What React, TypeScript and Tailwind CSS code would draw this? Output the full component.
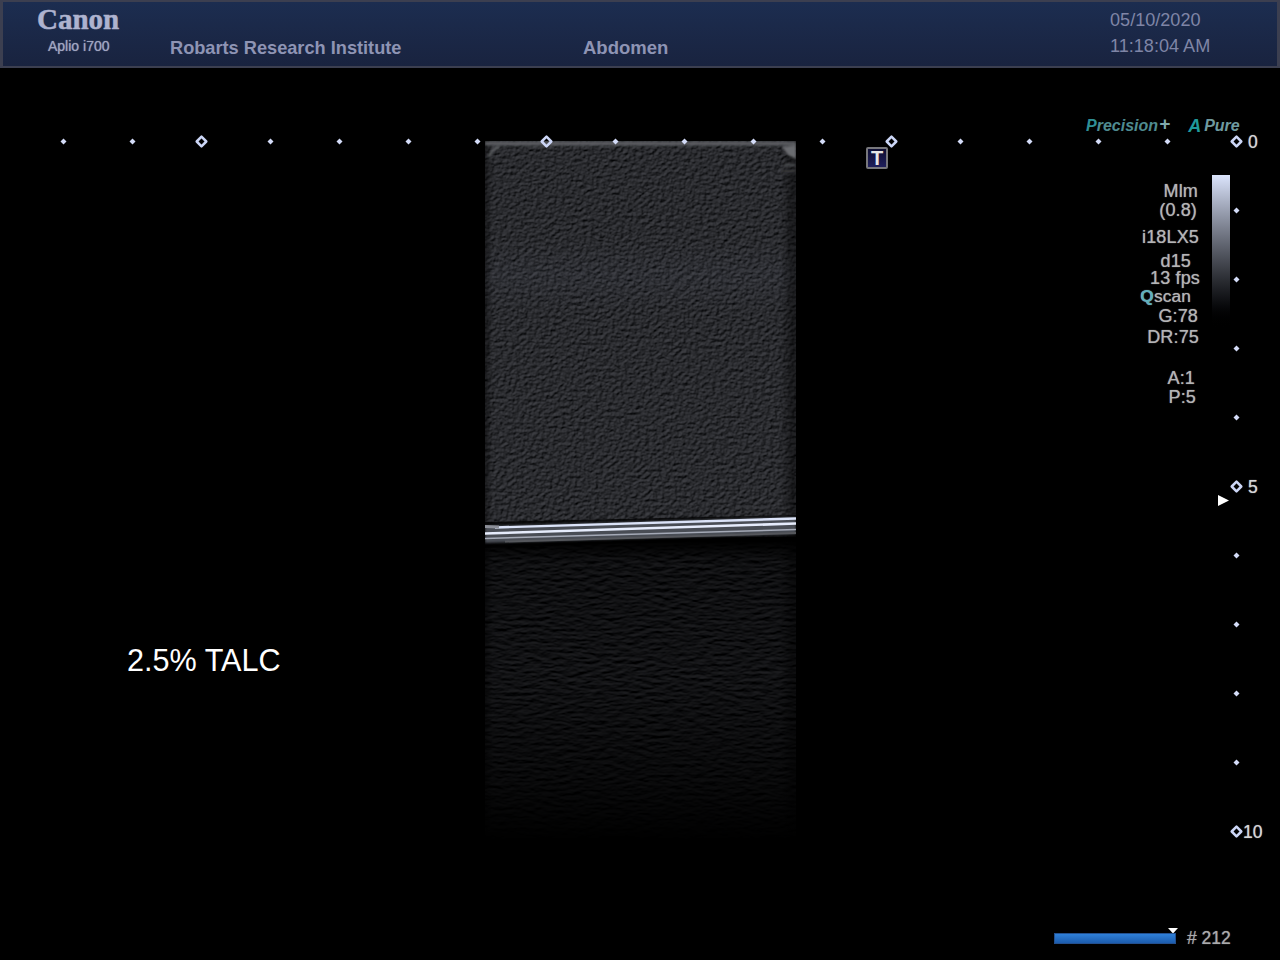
const ticksX = [63, 132, 201, 270, 339, 408, 477, 546, 615, 684, 753, 822, 891, 960, 1029, 1098, 1167, 1236];
const ticksY = [141, 210, 279, 348, 417, 486, 555, 624, 693, 762, 831];
const majorX = new Set([201, 546, 891, 1236]);
const majorY = new Set([141, 486, 831]);

function Tick({ x, y, major }: { x: number; y: number; major: boolean }) {
  if (major) {
    return <path d={`M${x} ${y - 4.8}L${x + 4.8} ${y}L${x} ${y + 4.8}L${x - 4.8} ${y}Z`} fill="none" stroke="#ccd6f6" strokeWidth="2.5" strokeLinejoin="round" />;
  }
  return <path d={`M${x} ${y - 3}L${x + 3} ${y}L${x} ${y + 3}L${x - 3} ${y}Z`} fill="#d4dcf8" />;
}

function Scale() {
  return (
    <svg className="absolute left-0 top-0" width="1280" height="960">
      {ticksX.map((x) => <Tick key={`x${x}`} x={x + 0.5} y={141.5} major={majorX.has(x)} />)}
      {ticksY.slice(1).map((y) => <Tick key={`y${y}`} x={1236.5} y={y + 0.5} major={majorY.has(y)} />)}
      <path d="M1218 495L1229 500.5L1218 506Z" fill="#ffffff" />
      <path d="M1168 928H1178L1173 933.5Z" fill="#ffffff" />
    </svg>
  );
}

function Sonogram() {
  return (
    <svg className="absolute left-[485px] top-[141px]" width="311" height="700" viewBox="0 0 311 700">
      <defs>
        <filter id="speckle" x="0" y="0" width="100%" height="100%" colorInterpolationFilters="sRGB">
          <feTurbulence type="fractalNoise" baseFrequency="0.24 0.3" numOctaves="3" seed="7" />
          <feGaussianBlur stdDeviation="0.55" />
          <feDiffuseLighting surfaceScale="0.95" diffuseConstant="1" lightingColor="#ffffff">
            <feDistantLight azimuth="235" elevation="55" />
          </feDiffuseLighting>
          <feColorMatrix type="matrix" values="0.5 0 0 0 -0.245  0 0.5 0 0 -0.24  0 0 0.53 0 -0.25  0 0 0 0 1" />
        </filter>
        <filter id="speckleLow" x="0" y="0" width="100%" height="100%" colorInterpolationFilters="sRGB">
          <feTurbulence type="fractalNoise" baseFrequency="0.09 0.28" numOctaves="3" seed="12" />
          <feGaussianBlur stdDeviation="0.7" />
          <feDiffuseLighting surfaceScale="0.85" diffuseConstant="1" lightingColor="#ffffff">
            <feDistantLight azimuth="260" elevation="55" />
          </feDiffuseLighting>
          <feColorMatrix type="matrix" values="0.4 0 0 0 -0.25  0 0.4 0 0 -0.248  0 0 0.42 0 -0.255  0 0 0 0 1" />
        </filter>
        <filter id="soft" x="-5%" y="-50%" width="110%" height="200%"><feGaussianBlur stdDeviation="0.8" /></filter>
        <linearGradient id="lowerFade" x1="0" y1="0" x2="0" y2="1">
          <stop offset="0" stopColor="#fff" stopOpacity="0" />
          <stop offset="0.07" stopColor="#fff" stopOpacity="0.75" />
          <stop offset="0.45" stopColor="#fff" stopOpacity="0.85" />
          <stop offset="0.8" stopColor="#fff" stopOpacity="0.4" />
          <stop offset="1" stopColor="#fff" stopOpacity="0" />
        </linearGradient>
        <linearGradient id="sideFade" x1="0" y1="0" x2="1" y2="0">
          <stop offset="0" stopColor="#000" stopOpacity="0.45" />
          <stop offset="0.025" stopColor="#000" stopOpacity="0" />
          <stop offset="0.95" stopColor="#000" stopOpacity="0" />
          <stop offset="0.985" stopColor="#000" stopOpacity="0.4" />
        </linearGradient>
        <linearGradient id="midGlow" x1="0" y1="0" x2="0" y2="1">
          <stop offset="0" stopColor="#8a94b4" stopOpacity="0" />
          <stop offset="0.5" stopColor="#8a94b4" stopOpacity="0.05" />
          <stop offset="1" stopColor="#8a94b4" stopOpacity="0" />
        </linearGradient>
        <mask id="lowerMask"><rect y="400" width="311" height="300" fill="url(#lowerFade)" /></mask>
      </defs>

      <rect width="311" height="396" filter="url(#speckle)" />
      <rect y="100" width="311" height="70" fill="url(#midGlow)" />
      <g mask="url(#lowerMask)">
        <rect y="400" width="311" height="300" filter="url(#speckleLow)" />
      </g>
      <rect width="311" height="700" fill="url(#sideFade)" />

      <g filter="url(#soft)">
        <path d="M0 2.5H311" stroke="#5a5c60" strokeWidth="4" />
        <path d="M3 16L8 9L14 6" stroke="#65676b" strokeWidth="2" fill="none" />
        <path d="M297 6L311 4V18L303 14Z" fill="#6a6c70" />
        <path d="M299 24H311" stroke="#55575a" strokeWidth="2" />
        <path d="M296 30H311" stroke="#3f4043" strokeWidth="2" />
      </g>

      <path d="M0 381L311 374V396L0 407Z" fill="#000000" opacity="0.75" />
      <g filter="url(#soft)">
        <path d="M0 385L311 376V393L0 402Z" fill="#4a4d55" />
      </g>
      <path d="M10 386.5L311 377.5" stroke="#dbe3f8" strokeWidth="2.4" />
      <path d="M0 385.5L14 386" stroke="#8c8f98" strokeWidth="3" />
      <path d="M0 392.5L311 382.5" stroke="#e6ecfc" strokeWidth="2.6" />
      <path d="M0 397.5L311 388.5" stroke="#a4a9b6" strokeWidth="1.5" />
      <path d="M20 400.5L311 392" stroke="#55575c" strokeWidth="2" />
    </svg>
  );
}

const labels = [
  { t: "Mlm", h: "h-[19px]", pr: "pr-[2px]" },
  { t: "(0.8)", h: "h-[27px]", pr: "pr-[3px]" },
  { t: "i18LX5", h: "h-[24px]", pr: "pr-[1px]" },
  { t: "d15", h: "h-[17px]", pr: "pr-[9px]" },
  { t: "13 fps", h: "h-[19px]", pr: "pr-0" },
];
const labels2 = [
  { t: "G:78", h: "h-[21px]", pr: "pr-[2px]" },
  { t: "DR:75", h: "h-[41px]", pr: "pr-[1px]" },
  { t: "A:1", h: "h-[19px]", pr: "pr-[5px]" },
  { t: "P:5", h: "h-[19px]", pr: "pr-[4px]" },
];

export default function App() {
  return (
    <div className="relative w-[1280px] h-[960px] overflow-hidden bg-black font-['Liberation_Sans',Arial,sans-serif]">
      <header className="flex h-[68px] border-x-[3px] border-y-2 border-[#3c3f50] bg-gradient-to-b from-[#1c2d50] to-[#19233f] text-[#8e94b4]">
        <div className="flex w-[167px] flex-col items-start">
          <span className="ml-[34px] mt-[3px] h-[27px] text-[29px] font-bold leading-[28px] text-[#aeb3cf] [-webkit-text-stroke:0.5px_#aeb3cf] font-['Liberation_Serif',serif]">Canon</span>
          <span className="ml-[45px] mt-[6px] text-[14px] leading-[16px] text-[#a0a6c2] [text-shadow:0_0_1px_#8c92ae]">Aplio i700</span>
        </div>
        <span className="mt-[36px] w-[413px] text-[18.2px] font-bold leading-5">Robarts Research Institute</span>
        <span className="mt-[36px] w-[527px] text-[18.5px] font-bold leading-5">Abdomen</span>
        <div className="mt-[9px] flex flex-col gap-[8px] text-[18.1px] leading-[18px] text-[#7f85a6]">
          <span>05/10/2020</span>
          <span>11:18:04 AM</span>
        </div>
      </header>

      <Sonogram />
      <Scale />

      <div className="absolute left-[1086px] top-[117px] flex w-[156px] items-start text-[16px] font-bold italic leading-[18px]">
        <span className="text-[#2f8f96]">P<span className="text-[#4f8b90]">recision</span></span>
        <span className="-mt-[2px] ml-[1px] text-[19px] text-[#7fa9ac]">+</span>
        <span className="ml-[18px] text-[18px] text-[#1f9a9a]">A</span>
        <span className="ml-[3px] text-[#6f9a9f]">Pure</span>
      </div>

      <div className="absolute left-[866px] top-[147px] flex h-[22px] w-[22px] items-center justify-center rounded-[2px] border-2 border-[#77777c] bg-gradient-to-b from-[#0e0e33] to-[#20205c] text-[20px] font-bold leading-none text-[#e6e6e6]">T</div>

      <div className="absolute left-[1212px] top-[175px] h-[155px] w-[18px] bg-gradient-to-b from-[#dbe4fc] to-black" />

      <div className="absolute left-[1100px] top-[182px] flex w-[100px] flex-col items-end text-[18px] leading-[18px] tracking-[0.15px] text-[#b4b4b6] [text-shadow:0_0_1px_#98989a]">
        {labels.map((l) => <div key={l.t} className={`${l.h} ${l.pr}`}>{l.t}</div>)}
        <div className="h-[19px] pr-[9px] text-[17.3px] leading-[17px]"><span className="font-bold text-[#5fb0bd]">Q</span>scan</div>
        {labels2.map((l) => <div key={l.t} className={`${l.h} ${l.pr}`}>{l.t}</div>)}
      </div>

      <span className="absolute left-[1248px] top-[133px] text-[17.5px] leading-[18px] text-[#d6d6d8] [text-shadow:0_0_1px_#b0b0b2]">0</span>
      <span className="absolute left-[1248px] top-[478px] text-[17.5px] leading-[18px] text-[#d6d6d8] [text-shadow:0_0_1px_#b0b0b2]">5</span>
      <span className="absolute left-[1243px] top-[823px] text-[17.5px] leading-[18px] text-[#d6d6d8] [text-shadow:0_0_1px_#b0b0b2]">10</span>

      <span className="absolute left-[127px] top-[643px] text-[30.6px] leading-[34px] text-white">2.5% TALC</span>

      <div className="absolute left-[1054px] top-[929px] flex items-center">
        <div className="h-[11px] w-[122px] border border-[#23508f] bg-gradient-to-b from-[#2f80d8] to-[#1c5cae]" />
        <span className="ml-[11px] text-[17.5px] leading-[18px] text-[#aaaaac] [text-shadow:0_0_1px_#909092]"># 212</span>
      </div>
    </div>
  );
}
